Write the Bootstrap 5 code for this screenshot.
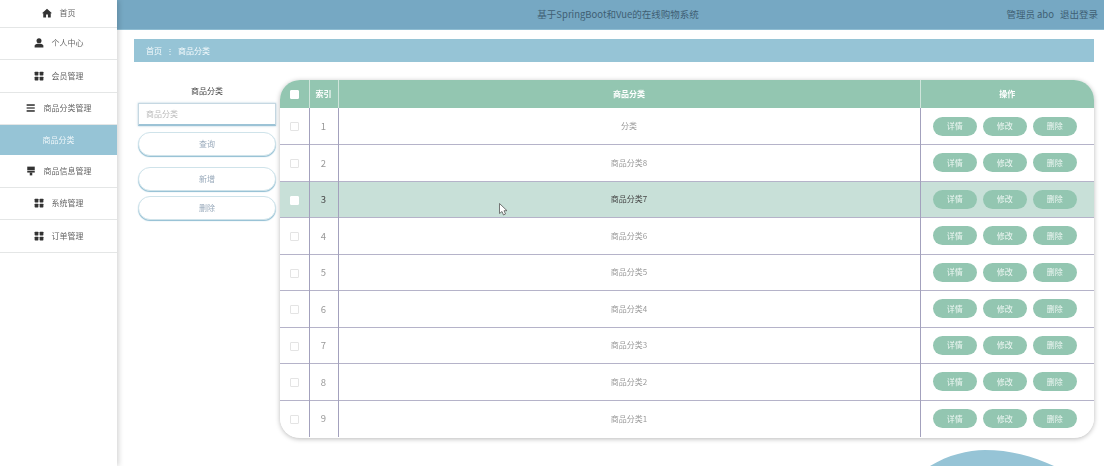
<!DOCTYPE html>
<html lang="zh-CN">
<head>
<meta charset="utf-8">
<title>商品分类</title>
<link href="https://cdn.jsdelivr.net/npm/bootstrap@5.3.0/dist/css/bootstrap.min.css" rel="stylesheet">
<style>
html,body{height:466px;overflow:hidden;background:#fff}
body{font-family:"Noto Sans CJK SC","Noto Sans",sans-serif;font-size:8px;color:#777;position:relative}
.shell{height:466px;filter:blur(.35px)}
.side{width:117px;flex:none;background:#fff;box-shadow:2px 0 5px rgba(0,0,0,.16);position:relative;z-index:2}
.side-item{height:32.5px;border-bottom:1px solid #e4e6e6;color:#666;gap:8px;font-size:8px}
.side-item:first-child{height:27.5px}
.side-item svg{width:10px;height:10px;fill:#333;flex:none}
.side-item.on{height:30px;background:#96c4d6;color:#eef6f9;border:0}
.top{height:30px;background:#76a8c3;border-bottom:1px solid #8fbdd2;color:#3f5f74;font-size:9.500px;position:relative;padding-left:15px}
.top-user{position:absolute;right:6px;top:0;height:29px;gap:6px}
.crumb{height:23px;margin:9px 10px 0 17px;background:#96c4d6;padding-left:12px;color:#f4fafc;gap:4px}
.body-row{margin:18px 10px 0 21px;gap:4px}
.panel{width:138px;flex:none}
.panel-title{height:23px;color:#444;padding-bottom:1px}
.inp{height:23px;border:1px solid #c6d8e2;border-bottom:2px solid #9cc3d6;box-shadow:0 0 2px rgba(118,168,195,.6);color:#bbb;padding-left:7px}
.pill{height:24px;width:100%;border-radius:12px;border:1px solid #cfe3ea;box-shadow:0 1px 1px #8fbdd2;background:#fff;color:#9ab;font-size:8px;padding:0;display:block}
.mt-a{margin-top:6px}.mt-b{margin-top:11px}.mt-c{margin-top:5px}
.tbl-wrap{width:814px;height:358px;flex:none;border-radius:20px;overflow:hidden;box-shadow:0 1px 5px rgba(0,0,0,.28);background:#fff}
.gridt{width:814px;table-layout:fixed;border-collapse:collapse;font-size:8px;color:#999;text-align:center}
.gridt th{height:28px;background:#93c6b1;color:#fff;font-weight:700;border-left:1px solid #cfe5db;padding:0;vertical-align:middle}
.gridt th:first-child,.gridt td:first-child{border-left:0}
.gridt td{height:36.5px;border-left:1px solid #a3a1bd;border-top:1px solid #b5b3c9;padding:0;vertical-align:middle;background:#fff}
.gridt tbody tr:first-child td{border-top:0}
.gridt tr.hl td{background:#c8e0d8;color:#444}
.gridt td.num{font-size:9.500px}
.box{display:inline-block;width:9px;height:9px;border:1px solid #e4e4e4;background:#fff;vertical-align:middle;border-radius:1px}
th .box,.hl .box{border-color:#fff}
.acts{gap:5.500px;padding-left:12px}
.act{width:44.500px;height:19px;border-radius:10px;background:#93c6b1;color:#eef7f3;border:0;font-size:8px;padding:0}
.blob{position:absolute;left:930px;top:450px;width:124px;height:16px;fill:#96c4d6}
.cursor{position:absolute;left:499px;top:203px;width:9px;height:13px}
</style>
</head>
<body>
<div class="shell d-flex">
  <nav class="side d-flex flex-column">
    <div class="side-item d-flex align-items-center justify-content-center"><svg viewBox="0 0 16 16"><path d="M8 1 0 8.500h2V15h4.500v-4.500h3V15H14V8.500h2z"/></svg><span>首页</span></div>
    <div class="side-item d-flex align-items-center justify-content-center"><svg viewBox="0 0 16 16"><circle cx="8" cy="4.500" r="4"/><path d="M1 15v-2.500C1 10 4 9 8 9s7 1 7 3.500V15z"/></svg><span>个人中心</span></div>
    <div class="side-item d-flex align-items-center justify-content-center"><svg viewBox="0 0 16 16"><rect x="1" y="1" width="6" height="6" rx="1"/><rect x="9" y="1" width="6" height="6" rx="1"/><rect x="1" y="9" width="6" height="6" rx="1"/><rect x="9" y="9" width="6" height="6" rx="1"/></svg><span>会员管理</span></div>
    <div class="side-item d-flex align-items-center justify-content-center"><svg viewBox="0 0 16 16"><rect x="1" y="2" width="13" height="2.500"/><rect x="1" y="7" width="13" height="2"/><rect x="1" y="11.500" width="13" height="2.500"/></svg><span>商品分类管理</span></div>
    <div class="side-item on d-flex align-items-center justify-content-center"><span>商品分类</span></div>
    <div class="side-item d-flex align-items-center justify-content-center"><svg viewBox="0 0 16 16"><rect x="2" y="1" width="12" height="6"/><rect x="2" y="8" width="12" height="2.500"/><rect x="6" y="10.500" width="4" height="4.500"/></svg><span>商品信息管理</span></div>
    <div class="side-item d-flex align-items-center justify-content-center"><svg viewBox="0 0 16 16"><rect x="1" y="1" width="6" height="6" rx="1"/><rect x="9" y="1" width="6" height="6" rx="1"/><rect x="1" y="9" width="6" height="6" rx="1"/><rect x="9" y="9" width="6" height="6" rx="1"/></svg><span>系统管理</span></div>
    <div class="side-item d-flex align-items-center justify-content-center"><svg viewBox="0 0 16 16"><rect x="1" y="1" width="6" height="6" rx="1"/><rect x="9" y="1" width="6" height="6" rx="1"/><rect x="1" y="9" width="6" height="6" rx="1"/><rect x="9" y="9" width="6" height="6" rx="1"/></svg><span>订单管理</span></div>
  </nav>
  <main class="flex-grow-1">
    <header class="top d-flex align-items-center justify-content-center">
      <span>基于SpringBoot和Vue的在线购物系统</span>
      <div class="top-user d-flex align-items-center"><span>管理员 abo</span><span>退出登录</span></div>
    </header>
    <div class="crumb d-flex align-items-center"><span>首页</span><span>⋮</span><span>商品分类</span></div>
    <div class="body-row d-flex">
      <aside class="panel">
        <div class="panel-title d-flex align-items-center justify-content-center">商品分类</div>
        <div class="inp d-flex align-items-center">商品分类</div>
        <button class="pill btn mt-a">查询</button>
        <button class="pill btn mt-b">新增</button>
        <button class="pill btn mt-c">删除</button>
      </aside>
      <div class="tbl-wrap">
        <table class="gridt">
          <colgroup><col style="width:29px"><col style="width:29px"><col style="width:582px"><col style="width:174px"></colgroup>
          <thead><tr><th><span class="box"></span></th><th>索引</th><th>商品分类</th><th>操作</th></tr></thead>
          <tbody>
            <tr><td><span class="box"></span></td><td class="num">1</td><td>分类</td><td><div class="acts d-flex"><button class="act btn">详情</button><button class="act btn">修改</button><button class="act btn">删除</button></div></td></tr>
            <tr><td><span class="box"></span></td><td class="num">2</td><td>商品分类8</td><td><div class="acts d-flex"><button class="act btn">详情</button><button class="act btn">修改</button><button class="act btn">删除</button></div></td></tr>
            <tr class="hl"><td><span class="box"></span></td><td class="num">3</td><td>商品分类7</td><td><div class="acts d-flex"><button class="act btn">详情</button><button class="act btn">修改</button><button class="act btn">删除</button></div></td></tr>
            <tr><td><span class="box"></span></td><td class="num">4</td><td>商品分类6</td><td><div class="acts d-flex"><button class="act btn">详情</button><button class="act btn">修改</button><button class="act btn">删除</button></div></td></tr>
            <tr><td><span class="box"></span></td><td class="num">5</td><td>商品分类5</td><td><div class="acts d-flex"><button class="act btn">详情</button><button class="act btn">修改</button><button class="act btn">删除</button></div></td></tr>
            <tr><td><span class="box"></span></td><td class="num">6</td><td>商品分类4</td><td><div class="acts d-flex"><button class="act btn">详情</button><button class="act btn">修改</button><button class="act btn">删除</button></div></td></tr>
            <tr><td><span class="box"></span></td><td class="num">7</td><td>商品分类3</td><td><div class="acts d-flex"><button class="act btn">详情</button><button class="act btn">修改</button><button class="act btn">删除</button></div></td></tr>
            <tr><td><span class="box"></span></td><td class="num">8</td><td>商品分类2</td><td><div class="acts d-flex"><button class="act btn">详情</button><button class="act btn">修改</button><button class="act btn">删除</button></div></td></tr>
            <tr><td><span class="box"></span></td><td class="num">9</td><td>商品分类1</td><td><div class="acts d-flex"><button class="act btn">详情</button><button class="act btn">修改</button><button class="act btn">删除</button></div></td></tr>
          </tbody>
        </table>
      </div>
    </div>
  </main>
</div>
<svg class="blob" viewBox="0 0 124 16"><path d="M0 16C18 5 38 0 55 0C80 0 102 6 124 16z"/></svg>
<svg class="cursor" viewBox="0 0 9 13"><path d="M.5.5v10l2.500-2 1.500 3.500 2-1-1.500-3.300H8z" fill="#fff" stroke="#555" stroke-width=".8"/></svg>
<script src="https://cdn.jsdelivr.net/npm/bootstrap@5.3.0/dist/js/bootstrap.bundle.min.js"></script>
</body>
</html>
